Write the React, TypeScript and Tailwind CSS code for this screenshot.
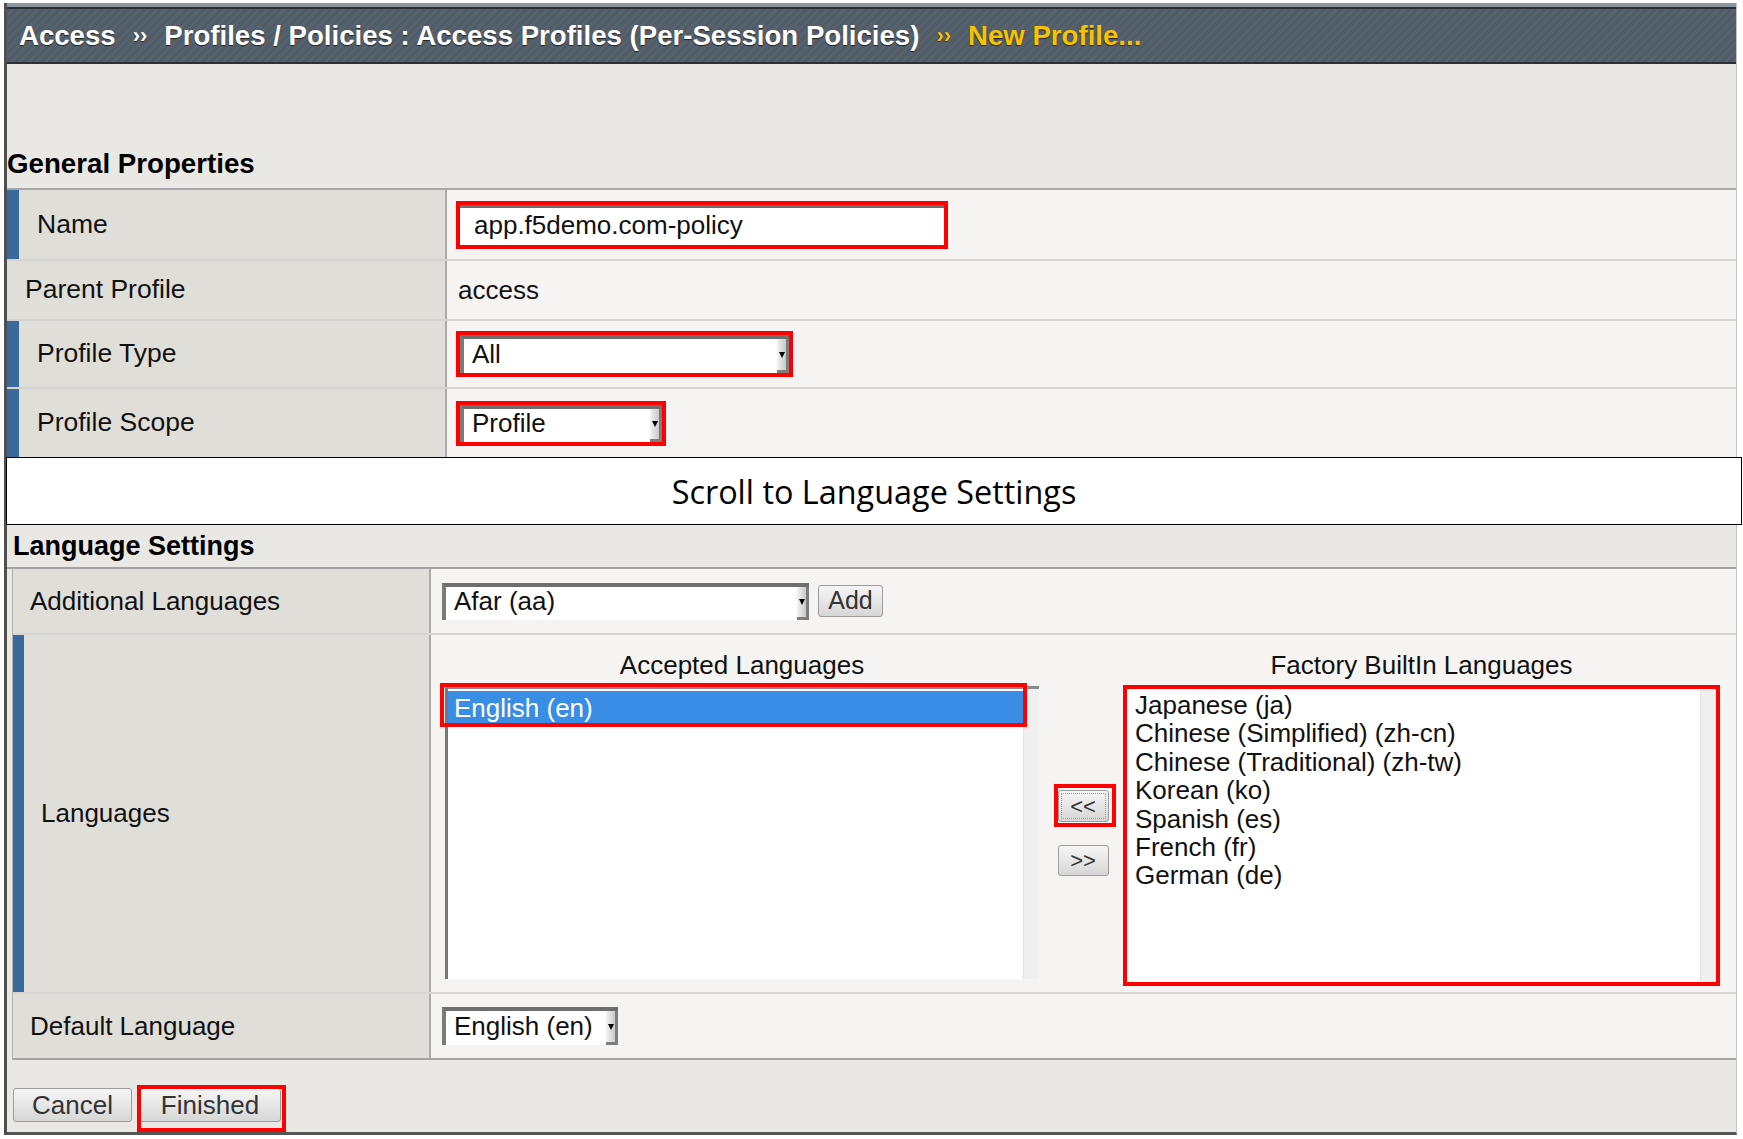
import React from "react";

function Arrow() {
  return (
    <span className="flex w-[12px] shrink-0 items-center justify-center border-b-[3px] border-r-[3px] border-b-[#7d7d7d] border-r-[#7d7d7d] bg-[linear-gradient(90deg,#f4f4f4,#c8c8c8)]">
      <span className="h-0 w-0 border-x-[3px] border-t-[6px] border-x-transparent border-t-black" />
    </span>
  );
}

function Select({ value, className = "" }: { value: string; className?: string }) {
  return (
    <div className={`flex border-l-[4px] border-t-[4px] border-l-[#7a7a7a] border-t-[#6e6e6e] bg-white ${className}`}>
      <span className="flex flex-1 items-center pb-[4px] pl-[8px] text-[26px] leading-none text-[#111]">{value}</span>
      <Arrow />
    </div>
  );
}

function Btn({ children, className = "" }: { children: React.ReactNode; className?: string }) {
  return (
    <div className={`flex items-center justify-center rounded-[3px] border border-[#9c9c9c] bg-[linear-gradient(#f6f6f6,#d6d6d6)] text-[#333] ${className}`}>
      {children}
    </div>
  );
}

const factory = [
  "Japanese (ja)",
  "Chinese (Simplified) (zh-cn)",
  "Chinese (Traditional) (zh-tw)",
  "Korean (ko)",
  "Spanish (es)",
  "French (fr)",
  "German (de)",
];

export default function App() {
  return (
    <div className="h-[1139px] w-[1743px] overflow-hidden bg-white font-['Liberation_Sans',Arial,sans-serif] text-[#111]">
      <div className="ml-[4px] mt-[3px] w-[1733px] border-b-[3px] border-l-[3px] border-r border-b-[#555] border-l-[#505050] border-r-[#c4c4c4] bg-[#e9e8e4]">
        {/* breadcrumb bar */}
        <div className="border-t-[4px] border-t-[#8e959d]">
          <div className="flex h-[57px] items-center border-y-[2px] border-[#2b3036] bg-[image:repeating-linear-gradient(135deg,#525c69_0px,#525c69_3px,#57626f_3px,#57626f_6px)] pl-[12px] text-[27.6px] font-bold text-white [text-shadow:0_1px_1px_#222]">
            <span>Access</span>
            <span className="mx-[17px] text-[22px]">››</span>
            <span>Profiles / Policies : Access Profiles (Per-Session Policies)</span>
            <span className="mx-[17px] text-[22px] text-[#f7c300]">››</span>
            <span className="text-[#f7c300]">New Profile...</span>
          </div>
        </div>

        {/* General Properties */}
        <div className="flex h-[126px] items-end border-b-[2px] border-[#a8a8a8] pb-[10px] text-[27.7px] font-bold leading-[28px] text-black">
          General Properties
        </div>

        <div className="flex h-[71px] border-b-[2px] border-[#d4d3cf]">
          <div className="flex w-[440px] items-center border-r-[2px] border-[#a9a9a9] bg-[#dfded9]">
            <div className="h-full w-[12px] bg-[#3a6a9c]" />
            <span className="pl-[18px] text-[26.5px]">Name</span>
          </div>
          <div className="flex flex-1 items-center bg-[#f5f4f2] pl-[9px]">
            <div className="h-[48px] w-[492px] border-[4px] border-[#ff0000]">
              <div className="flex h-full items-center border-t-[3px] border-[#6e6e6e] bg-white pb-[2px] pl-[14px] text-[26px]">
                app.f5demo.com-policy
              </div>
            </div>
          </div>
        </div>

        <div className="flex h-[60px] border-b-[2px] border-[#d4d3cf]">
          <div className="flex w-[440px] items-center border-r-[2px] border-[#a9a9a9] bg-[#dfded9]">
            <span className="pl-[18px] text-[26.5px]">Parent Profile</span>
          </div>
          <div className="flex flex-1 items-center bg-[#f5f4f2] pl-[11px] text-[26px]">access</div>
        </div>

        <div className="flex h-[68px] border-b-[2px] border-[#d4d3cf]">
          <div className="flex w-[440px] items-center border-r-[2px] border-[#a9a9a9] bg-[#dfded9]">
            <div className="h-full w-[12px] bg-[#3a6a9c]" />
            <span className="pl-[18px] text-[26.5px]">Profile Type</span>
          </div>
          <div className="flex flex-1 items-center bg-[#f5f4f2] pl-[9px]">
            <div className="h-[46px] w-[337px] border-[4px] border-[#ff0000]">
              <Select value="All" className="h-full" />
            </div>
          </div>
        </div>

        <div className="flex h-[68px]">
          <div className="flex w-[440px] items-center border-r-[2px] border-[#a9a9a9] bg-[#dfded9]">
            <div className="h-full w-[12px] bg-[#3a6a9c]" />
            <span className="pl-[18px] text-[26.5px]">Profile Scope</span>
          </div>
          <div className="flex flex-1 items-center bg-[#f5f4f2] pl-[9px]">
            <div className="h-[45px] w-[210px] border-[4px] border-[#ff0000]">
              <Select value="Profile" className="h-full" />
            </div>
          </div>
        </div>

        {/* annotation banner */}
        <div className="relative -ml-[1px] -mr-[6px] flex h-[68px] items-center justify-center border border-black bg-white font-['Open_Sans',sans-serif] text-[32.4px] text-black">
          Scroll to Language Settings
        </div>

        {/* Language Settings */}
        <div className="flex h-[44px] items-center border-b-[2px] border-[#a3a3a3] pl-[6px] text-[27px] font-bold text-black">
          Language Settings
        </div>

        <div className="ml-[5px] border-l border-[#b0b0b0]">
          <div className="flex h-[66px] border-b-[2px] border-[#d6d5d1]">
            <div className="flex w-[418px] items-center border-r-[2px] border-[#a9a9a9] bg-[#dfded9] pl-[17px] text-[26px]">
              Additional Languages
            </div>
            <div className="flex flex-1 items-center gap-[9px] bg-[#f5f4f2] pl-[11px]">
              <Select value="Afar (aa)" className="h-[37px] w-[367px]" />
              <Btn className="h-[32px] w-[65px] text-[25px]">Add</Btn>
            </div>
          </div>

          <div className="flex h-[359px] border-b-[2px] border-[#d6d5d1]">
            <div className="flex w-[418px] items-center border-r-[2px] border-[#a9a9a9] bg-[#dfded9]">
              <div className="h-full w-[11px] bg-[#3a6a9c]" />
              <span className="pl-[17px] text-[26px]">Languages</span>
            </div>
            <div className="flex-1 bg-[#f5f4f2] pl-[14px] pt-[15px]">
              <div className="flex h-[36px] text-[26px] leading-[30px]">
                <div className="w-[594px] text-center">Accepted Languages</div>
                <div className="w-[84px]" />
                <div className="w-[597px] text-center">Factory BuiltIn Languages</div>
              </div>
              <div className="flex">
                <div className="relative flex h-[293px] w-[594px] border-l-[3px] border-t-[3px] border-l-[#777] border-t-[#8a8a8a] bg-white">
                  <div className="flex-1 pt-[1px]">
                    <div className="mt-[1px] flex h-[34px] items-center bg-[#3a8de5] pl-[6px] text-[26px] text-white">
                      English (en)
                    </div>
                  </div>
                  <div className="w-[16px] border-l border-[#e2e2e2] bg-[#efefef]" />
                  <div className="absolute -left-[8px] -top-[6px] h-[44px] w-[587px] border-[4px] border-[#ff0000]" />
                </div>

                <div className="flex w-[84px] flex-col items-center pl-[4px] pt-[104px]">
                  <div className="relative">
                    <Btn className="h-[32px] w-[51px] text-[22px]">
                      <span className="flex h-[26px] w-[45px] items-center justify-center border border-dotted border-[#999]">&lt;&lt;</span>
                    </Btn>
                    <div className="absolute -left-[4px] -top-[6px] h-[43px] w-[62px] border-[4px] border-[#ff0000]" />
                  </div>
                  <Btn className="mt-[23px] h-[31px] w-[51px] text-[22px]">&gt;&gt;</Btn>
                </div>

                <div className="flex h-[301px] w-[597px] -translate-y-[1px] border-[4px] border-[#ff0000] bg-white">
                  <div className="flex-1 pl-[8px] pt-[2px] text-[26px] leading-[28.4px]">
                    {factory.map((f) => (
                      <div key={f}>{f}</div>
                    ))}
                  </div>
                  <div className="w-[16px] border-l border-[#e2e2e2] bg-[#efefef]" />
                </div>
              </div>
            </div>
          </div>

          <div className="flex h-[66px] border-b-[2px] border-[#a3a3a3]">
            <div className="flex w-[418px] items-center border-r-[2px] border-[#a9a9a9] bg-[#dfded9] pl-[17px] text-[26px]">
              Default Language
            </div>
            <div className="flex flex-1 items-center bg-[#f5f4f2] pl-[11px]">
              <Select value="English (en)" className="h-[38px] w-[176px]" />
            </div>
          </div>
        </div>

        {/* footer buttons */}
        <div className="flex h-[72px] gap-[7px] pl-[6px] pt-[28px]">
          <Btn className="h-[34px] w-[119px] text-[26px]">Cancel</Btn>
          <div className="relative">
            <Btn className="h-[34px] w-[142px] text-[26px]">Finished</Btn>
            <div className="absolute -left-[2px] -top-[3px] h-[47px] w-[149px] border-[4px] border-[#ff0000]" />
          </div>
        </div>
      </div>
    </div>
  );
}
